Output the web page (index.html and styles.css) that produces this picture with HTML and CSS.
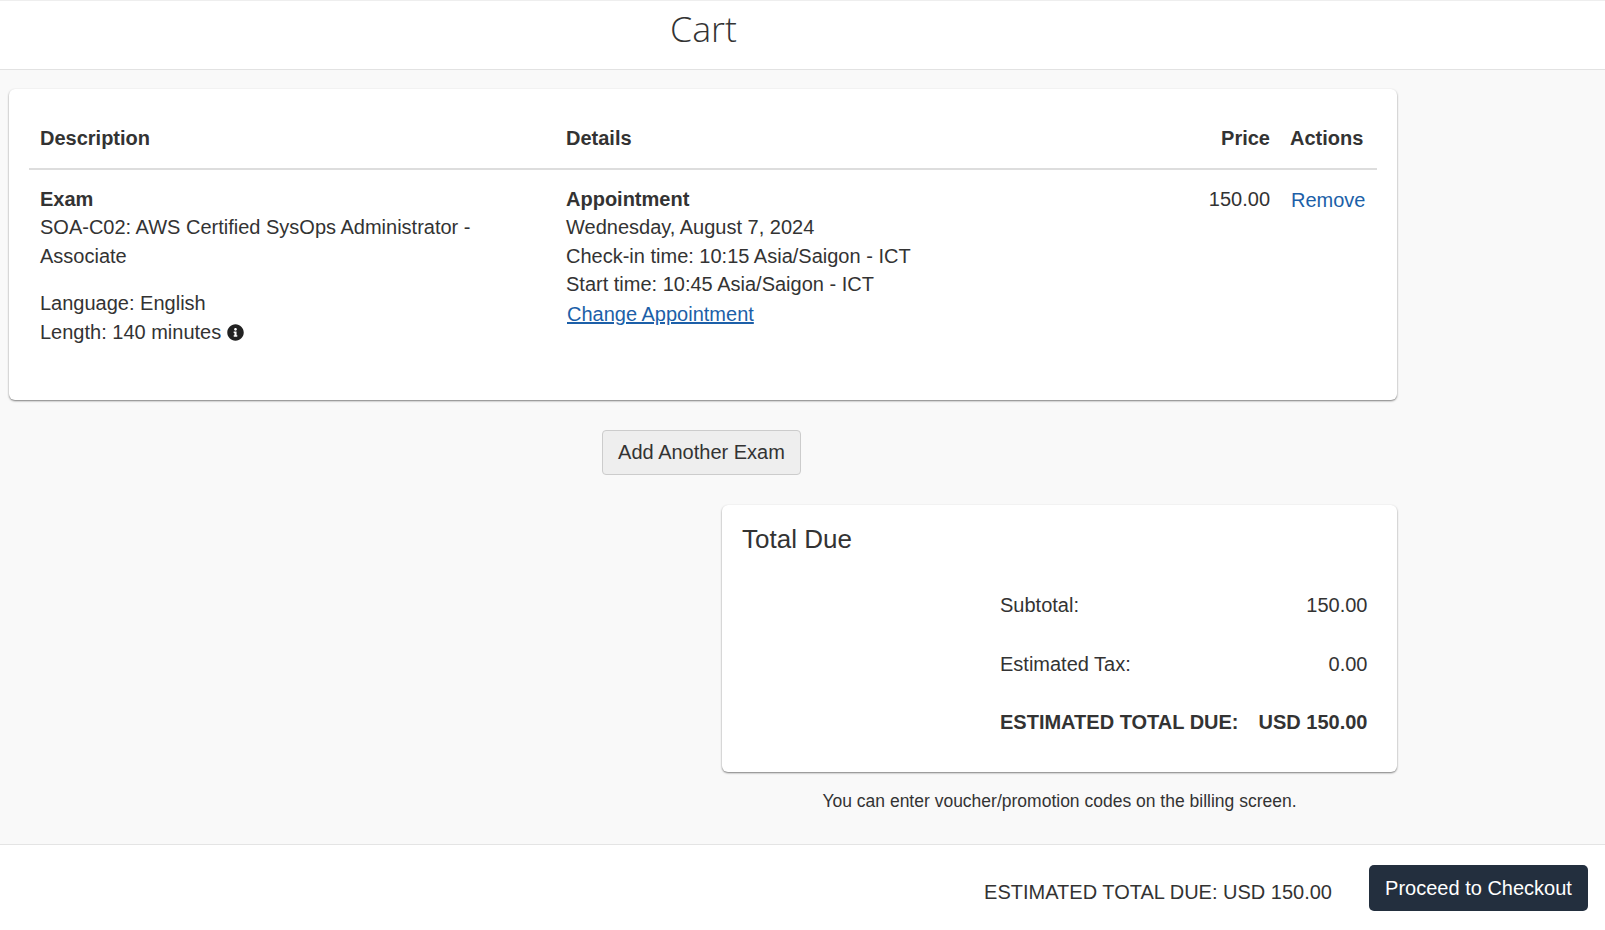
FILE: index.html
```html
<!DOCTYPE html>
<html>

<head>
	<title>Cart</title>
	<link rel="stylesheet" href="styles.css">
</head>

<body>
	<header class="page-head">
		<h1>Cart</h1>
	</header>

	<main class="main">
		<section class="card cart-card">
			<table class="cart-table">
				<thead>
					<tr>
						<th class="col-desc">Description</th>
						<th class="col-details">Details</th>
						<th class="col-price">Price</th>
						<th class="col-actions">Actions</th>
					</tr>
				</thead>
				<tbody>
					<tr>
						<td>
							<b>Exam</b><br>
							SOA-C02: AWS Certified SysOps Administrator - Associate
							<p class="exam-meta">
								Language: English<br>
								Length: 140 minutes
								<svg class="info-icon" viewBox="0 0 512 512"><path d="M256 8C119.043 8 8 119.083 8 256c0 136.997 111.043 248 248 248s248-111.003 248-248C504 119.083 392.957 8 256 8zm0 110c23.196 0 42 18.804 42 42s-18.804 42-42 42-42-18.804-42-42 18.804-42 42-42zm56 254c0 6.627-5.373 12-12 12h-88c-6.627 0-12-5.373-12-12v-24c0-6.627 5.373-12 12-12h12v-64h-12c-6.627 0-12-5.373-12-12v-24c0-6.627 5.373-12 12-12h64c6.627 0 12 5.373 12 12v100h12c6.627 0 12 5.373 12 12v24z"/></svg>
							</p>
						</td>
						<td>
							<b>Appointment</b><br>
							Wednesday, August 7, 2024<br>
							Check-in time: 10:15 Asia/Saigon - ICT<br>
							Start time: 10:45 Asia/Saigon - ICT<br>
							<a class="change-link" href="#">Change Appointment</a>
						</td>
						<td class="col-price">150.00</td>
						<td class="col-actions"><a class="remove-link" href="#">Remove</a></td>
					</tr>
				</tbody>
			</table>
		</section>

		<div class="add-row">
			<button type="button" class="btn-add">Add Another Exam</button>
		</div>

		<div class="total-col">
			<section class="card total-card">
				<h2>Total Due</h2>
				<div class="total-grid">
					<span>Subtotal:</span><span class="amount">150.00</span>
					<span>Estimated Tax:</span><span class="amount">0.00</span>
					<b>ESTIMATED TOTAL DUE:</b><b class="amount">USD 150.00</b>
				</div>
			</section>
			<p class="voucher-note">You can enter voucher/promotion codes on the billing screen.</p>
		</div>
	</main>

	<footer class="page-foot">
		<span class="foot-total">ESTIMATED TOTAL DUE: USD 150.00</span>
		<button type="button" class="btn-checkout">Proceed to Checkout</button>
	</footer>
</body>

</html>
```

FILE: styles.css
```css
html, body { height: 100%; }
body { margin: 0; background: #f9f9f9; color: #333; font: 20px/28.57px "Liberation Sans", Arial, sans-serif; overflow: hidden; }
a { color: #1c5fa8; }
b, th { font-weight: bold; }

.page-head { height: 68px; background: #fff; border-top: 1px solid #eee; border-bottom: 1px solid #e2e2e2; }
.page-head h1 { margin: 0; padding: 6px 0 0 670px; font: 300 35.7px/42px "Open Sans", sans-serif; color: #333; }

.main { width: 1388px; margin-left: 9px; padding-top: 19px; height: 774px; box-sizing: border-box; }
.card { background: #fff; border-radius: 6px; box-shadow: 0 1px 2px rgba(0, 0, 0, .5); }

.cart-card { height: 311px; padding: 20px; box-sizing: border-box; }
.cart-table { width: 100%; table-layout: fixed; border-collapse: collapse; }
.cart-table th { text-align: left; padding: 15px 11px; border-bottom: 2px solid #ddd; }
.cart-table td { vertical-align: top; padding: 15px 11px 0; }
.cart-table .col-desc { width: 504px; }
.cart-table .col-price { width: 95px; padding-left: 0; padding-right: 0; text-align: right; }
.cart-table .col-actions { width: 76px; padding-left: 20px; padding-right: 11px; }
.exam-meta { margin: 19px 0 0; }
.info-icon { width: 17px; height: 17px; fill: #222; vertical-align: -2px; }
.change-link { display: inline-block; margin: 1px 0 0 1px; }
.remove-link { display: inline-block; margin: 1px 0 0 1px; text-decoration: none; white-space: nowrap; }

.add-row { padding-top: 30px; padding-left: 593px; }
.btn-add { height: 45px; width: 199px; padding: 0; background: #eee; border: 1px solid #ccc; border-radius: 4px; color: #333; font: inherit; }

.total-col { width: 675px; margin: 30px 0 0 auto; }
.total-card { height: 267px; padding: 20px 31px 0 20px; box-sizing: border-box; }
.total-card h2 { margin: 0; font: 400 26px/28px "Liberation Sans", Arial, sans-serif; }
.total-grid { display: grid; grid-template-columns: auto auto; column-gap: 20px; row-gap: 30px; padding-top: 38px; width: 366px; margin-left: auto; justify-content: space-between; white-space: nowrap; }
.amount { text-align: right; }
.voucher-note { margin: 15px 0 0; text-align: center; font-size: 17.5px; }

.page-foot { height: 86px; box-sizing: border-box; background: #fff; border-top: 1px solid #e4e4e4; display: flex; justify-content: flex-end; align-items: flex-start; padding: 20px 17px 0 0; }
.foot-total { margin: 13px 37px 0 0; }
.btn-checkout { height: 46px; width: 219px; padding: 0; background: #232f3e; border: 0; border-radius: 5px; color: #fff; font: inherit; }
```
